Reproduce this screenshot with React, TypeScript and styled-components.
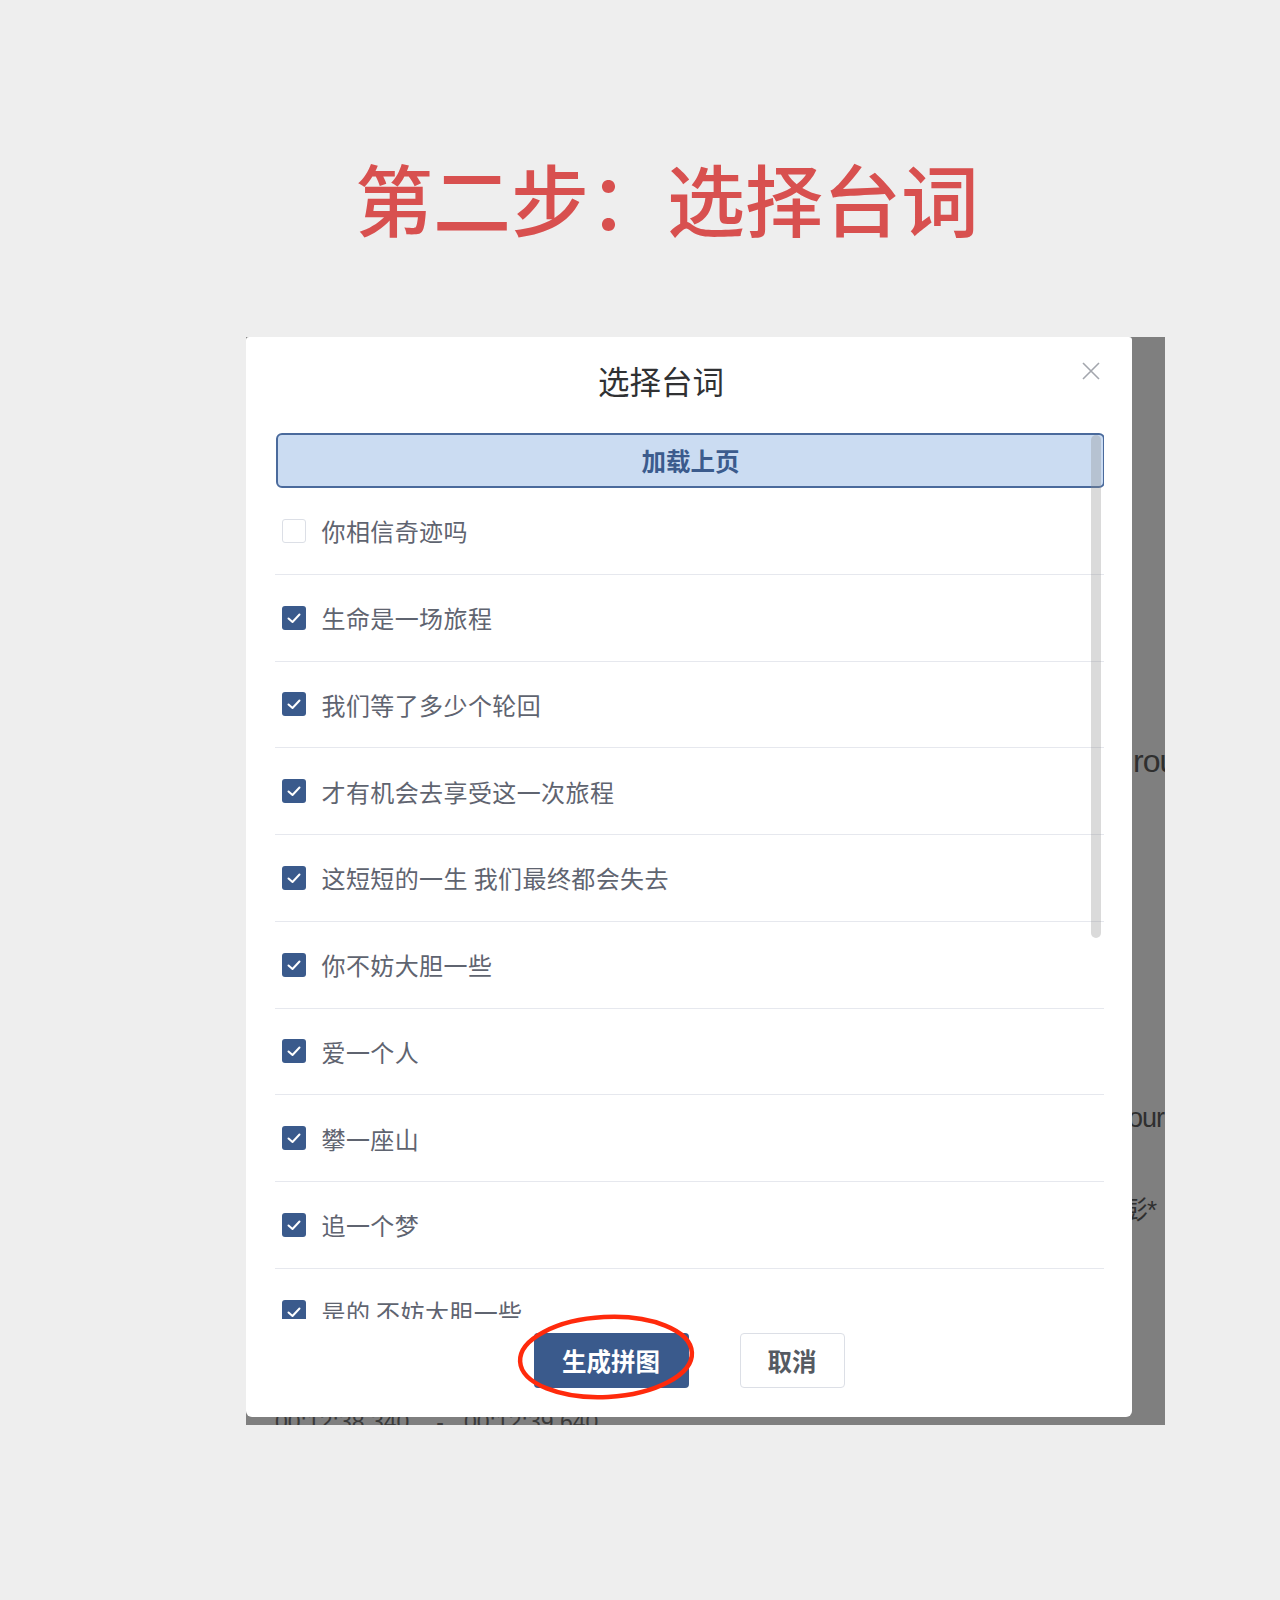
import styled, { createGlobalStyle } from "styled-components";

const CJK = `"Noto Sans CJK SC", "Noto Sans", sans-serif`;

const GlobalStyle = createGlobalStyle`
  html, body {
    margin: 0;
    padding: 0;
    background: #eeeeee;
  }
  body {
    font-family: ${CJK};
  }
`;

const lines = [
  { text: "你相信奇迹吗", checked: false },
  { text: "生命是一场旅程", checked: true },
  { text: "我们等了多少个轮回", checked: true },
  { text: "才有机会去享受这一次旅程", checked: true },
  { text: "这短短的一生 我们最终都会失去", checked: true },
  { text: "你不妨大胆一些", checked: true },
  { text: "爱一个人", checked: true },
  { text: "攀一座山", checked: true },
  { text: "追一个梦", checked: true },
  { text: "是的 不妨大胆一些", checked: true },
];

const Page = styled.div`
  width: 1280px;
  min-height: 1600px;
  padding-top: 158px;
  box-sizing: border-box;
`;

const Heading = styled.h1`
  margin: 0;
  padding-left: 54px;
  text-align: center;
  font-family: ${CJK};
  font-size: 78px;
  line-height: 78px;
  font-weight: 500;
  color: #d8504f;
`;

const Backdrop = styled.div`
  position: relative;
  margin: 101px 0 0 246px;
  width: 919px;
  height: 1088px;
  background: #7f7f7f;
  overflow: hidden;
`;

const BackText = styled.div<{ $top: number; $left: number; $size: number }>`
  position: absolute;
  top: ${(p) => p.$top}px;
  left: ${(p) => p.$left}px;
  font-family: "Liberation Sans", ${CJK};
  font-size: ${(p) => p.$size}px;
  letter-spacing: -1px;
  line-height: 1;
  color: #2f2f2f;
  white-space: nowrap;
`;

const TimeRow = styled.div`
  position: absolute;
  top: 1074px;
  left: 29px;
  display: flex;
  font-family: "Liberation Sans", sans-serif;
  font-size: 23px;
  line-height: 1;
  color: #3a3a3a;
  white-space: nowrap;

  & > span:nth-child(2) {
    margin: 0 20px 0 27px;
  }
`;

const Dialog = styled.div`
  position: relative;
  z-index: 1;
  width: 886px;
  height: 1080px;
  background: #ffffff;
  border-radius: 3px 3px 6px 6px;
  display: flex;
  flex-direction: column;
`;

const DialogHeader = styled.div`
  position: relative;
  height: 96px;
  display: flex;
  align-items: center;
  justify-content: center;
  padding: 0 56px 10px 0;
  box-sizing: border-box;
`;

const DialogTitle = styled.h2`
  margin: 0;
  font-family: ${CJK};
  font-size: 31.5px;
  font-weight: 400;
  color: #303133;
`;

const CloseButton = styled.button`
  position: absolute;
  top: 25px;
  right: 32px;
  width: 18px;
  height: 18px;
  padding: 0;
  border: none;
  background: none;
  display: flex;
`;

const ScrollArea = styled.div`
  position: relative;
  height: 886px;
  margin: 0 28px 0 29px;
  overflow: hidden;
`;

const ScrollThumb = styled.div`
  position: absolute;
  top: 2px;
  right: 3px;
  width: 10px;
  height: 503px;
  border-radius: 5px;
  background: rgba(140, 140, 140, 0.32);
`;

const LoadButton = styled.button`
  display: block;
  width: 829px;
  height: 55px;
  margin-left: 1px;
  box-sizing: border-box;
  border: 2px solid #4a6a9c;
  border-radius: 6px;
  background: #cbdcf2;
  font-family: ${CJK};
  font-size: 24.5px;
  font-weight: 600;
  color: #3b5b8d;
`;

const LineRow = styled.label`
  height: 86.75px;
  box-sizing: border-box;
  border-bottom: 1.5px solid #e6e8ee;
  display: flex;
  align-items: center;
  padding-left: 7px;
  gap: 15.5px;
`;

const CheckBox = styled.span<{ $checked: boolean }>`
  width: 24px;
  height: 24px;
  box-sizing: border-box;
  border-radius: 3px;
  border: ${(p) => (p.$checked ? "none" : "1.5px solid #dcdfe6")};
  background: ${(p) => (p.$checked ? "#3a5a8c" : "#ffffff")};
  display: flex;
  align-items: center;
  justify-content: center;
  flex-shrink: 0;
`;

const LineText = styled.span`
  font-family: ${CJK};
  font-size: 24px;
  letter-spacing: 0.4px;
  color: #5f6470;
`;

const Footer = styled.div`
  position: relative;
  display: flex;
  justify-content: center;
  gap: 51px;
  padding-top: 14px;
`;

const PrimaryButton = styled.button`
  width: 155px;
  height: 55px;
  border: none;
  border-radius: 4px;
  background: #3a5a8c;
  font-family: ${CJK};
  font-size: 24.5px;
  font-weight: 700;
  color: #ffffff;
`;

const CancelButton = styled.button`
  width: 105px;
  height: 55px;
  box-sizing: border-box;
  border: 1.5px solid #dcdfe6;
  border-radius: 4px;
  background: #ffffff;
  font-family: ${CJK};
  font-size: 24.5px;
  font-weight: 700;
  color: #555a62;
`;

const Annotation = styled.svg`
  position: absolute;
  left: 268px;
  top: -8px;
  pointer-events: none;
`;

export default function App() {
  return (
    <Page>
      <GlobalStyle />
      <Heading>第二步：选择台词</Heading>
      <Backdrop>
        <BackText $top={408} $left={887} $size={32}>
          rou
        </BackText>
        <BackText $top={768} $left={882} $size={27}>
          our
        </BackText>
        <BackText $top={860} $left={876} $size={26}>
          彭*
        </BackText>
        <TimeRow>
          <span>00:12:38.340</span>
          <span>-</span>
          <span>00:12:39.640</span>
        </TimeRow>
        <Dialog>
          <DialogHeader>
            <DialogTitle>选择台词</DialogTitle>
            <CloseButton aria-label="close">
              <svg width="18" height="18" viewBox="0 0 18 18">
                <path d="M1 1 L17 17 M17 1 L1 17" stroke="#a3a6ad" strokeWidth="1.6" />
              </svg>
            </CloseButton>
          </DialogHeader>
          <ScrollArea>
            <LoadButton>加载上页</LoadButton>
            {lines.map((line) => (
              <LineRow key={line.text}>
                <CheckBox $checked={line.checked}>
                  {line.checked && (
                    <svg width="24" height="24" viewBox="0 0 24 24">
                      <polyline
                        points="6.5,12.5 10.5,16 17.5,8.5"
                        fill="none"
                        stroke="#ffffff"
                        strokeWidth="2"
                        strokeLinecap="round"
                        strokeLinejoin="round"
                      />
                    </svg>
                  )}
                </CheckBox>
                <LineText>{line.text}</LineText>
              </LineRow>
            ))}
            <ScrollThumb />
          </ScrollArea>
          <Footer>
            <PrimaryButton>生成拼图</PrimaryButton>
            <CancelButton>取消</CancelButton>
            <Annotation width="184" height="92" viewBox="0 0 184 92">
              <ellipse
                cx="92"
                cy="46"
                rx="86"
                ry="40"
                fill="none"
                stroke="#ff2a0c"
                strokeWidth="4.5"
                transform="rotate(-3 92 46)"
              />
            </Annotation>
          </Footer>
        </Dialog>
      </Backdrop>
    </Page>
  );
}
